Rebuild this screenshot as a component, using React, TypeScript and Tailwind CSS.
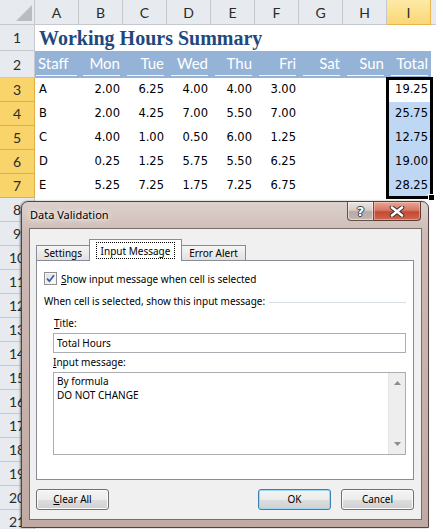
import React from "react";

const cols = ["A", "B", "C", "D", "E", "F", "G", "H", "I"];
const heads = ["Staff", "Mon", "Tue", "Wed", "Thu", "Fri", "Sat", "Sun", "Total"];
const data = [
  ["A", "2.00", "6.25", "4.00", "4.00", "3.00", "", "", "19.25"],
  ["B", "2.00", "4.25", "7.00", "5.50", "7.00", "", "", "25.75"],
  ["C", "4.00", "1.00", "0.50", "6.00", "1.25", "", "", "12.75"],
  ["D", "0.25", "1.25", "5.75", "5.50", "6.25", "", "", "19.00"],
  ["E", "5.25", "7.25", "1.75", "7.25", "6.75", "", "", "28.25"],
];

const rowHeadNorm =
  "w-[35px] shrink-0 flex items-center justify-center border-r border-b font-['Lato',sans-serif] text-[14px] bg-[#e7eaee] border-[#c5c9cf] text-[#2b2b2b]";
const rowHeadSel =
  "w-[35px] shrink-0 flex items-center justify-center border-r border-b font-['Lato',sans-serif] text-[14px] bg-[#f8d46b] border-[#dfae45] text-[#2b2b2b]";

function Btn({ children, def }: { children: React.ReactNode; def?: boolean }) {
  return (
    <div
      className={
        def
          ? "w-[73px] h-[21px] rounded-[3px] border border-[#3c7fb1] bg-[linear-gradient(180deg,#f4f4f4_0%,#ececec_50%,#dedede_51%,#d0d0d0_100%)] shadow-[inset_0_0_0_1px_#9fd7f5] flex items-center justify-center text-[10px] text-black"
          : "w-[73px] h-[21px] rounded-[3px] border border-[#707070] bg-[linear-gradient(180deg,#f4f4f4_0%,#ececec_50%,#dedede_51%,#d0d0d0_100%)] shadow-[inset_0_0_0_1px_#fbfbfb] flex items-center justify-center text-[10px] text-black"
      }
    >
      {children}
    </div>
  );
}

export default function App() {
  const lowerRows = [8, 9, 10, 11, 12, 13, 14, 15, 16, 17, 18, 19, 20, 21];
  return (
    <div className="relative w-[436px] h-[529px] overflow-hidden bg-white">
      {/* Spreadsheet */}
      <div className="flex flex-col">
        {/* Column headers */}
        <div className="flex h-[25px]">
          <div className="w-[35px] h-[25px] shrink-0 border-r border-b border-[#c5c9cf] bg-[#e7eaee] relative">
            <svg className="absolute left-[15px] top-[4px]" width="18" height="18" viewBox="0 0 18 18">
              <polygon points="17,1 17,17 1,17" fill="#b9bcc0" />
            </svg>
          </div>
          {cols.map((c) => (
            <div
              key={c}
              className={
                c === "I"
                  ? "w-[44px] h-[25px] shrink-0 flex items-center justify-center border-r border-b border-[#e9b64e] bg-[linear-gradient(180deg,#feeaa6_0%,#f9d775_100%)] font-['Lato',sans-serif] text-[14px] text-[#2b2b2b]"
                  : "w-[44px] h-[25px] shrink-0 flex items-center justify-center border-r border-b border-[#c5c9cf] bg-[#e7eaee] font-['Lato',sans-serif] text-[14px] text-[#2b2b2b]"
              }
            >
              {c}
            </div>
          ))}
          <div className="flex-1 h-[25px] border-b border-[#c5c9cf] bg-[#e7eaee]" />
        </div>

        {/* Row 1 */}
        <div className="flex h-[26px]">
          <div className={rowHeadNorm}>1</div>
          <div className="flex-1 flex items-center pl-[4px] font-['Liberation_Serif',serif] font-bold text-[20px] text-[#1f497d] whitespace-nowrap">
            Working Hours Summary
          </div>
        </div>

        {/* Row 2 */}
        <div className="flex h-[27px]">
          <div className={rowHeadNorm}>2</div>
          {heads.map((h, i) => (
            <div key={h} className="w-[44px] shrink-0 h-full bg-[#95b3d7] flex flex-col">
              <div
                className={
                  i === 0
                    ? "flex-1 flex items-center justify-start pl-[3px] pt-[1px] font-['Lato',sans-serif] text-[15px] text-white"
                    : "flex-1 flex items-center justify-end pr-[3px] pt-[1px] font-['Lato',sans-serif] text-[15px] text-white"
                }
              >
                {h}
              </div>
              <div
                className={
                  i === 0
                    ? "h-[2px] ml-[1px] mr-[2px] mb-[2px] bg-[#f4f7fb]"
                    : "h-[2px] ml-[4px] mr-[3px] mb-[2px] bg-[#f4f7fb]"
                }
              />
            </div>
          ))}
          <div className="flex-1" />
        </div>

        {/* Rows 3-7 */}
        {data.map((r, ri) => (
          <div key={ri} className="flex h-[24px]">
            <div className={rowHeadSel}>{ri + 3}</div>
            {r.map((v, ci) => (
              <div
                key={ci}
                className={
                  ci === 0
                    ? "w-[44px] shrink-0 flex items-center pl-[4px] font-['DejaVu_Sans',sans-serif] text-[11.5px] text-black"
                    : ci === 8 && ri > 0
                    ? "w-[44px] shrink-0 flex items-center justify-end pr-[3px] bg-[#bed7f5] font-['DejaVu_Sans',sans-serif] text-[11.5px] text-black"
                    : "w-[44px] shrink-0 flex items-center justify-end pr-[3px] font-['DejaVu_Sans',sans-serif] text-[11.5px] text-black"
                }
              >
                {v}
              </div>
            ))}
            <div className="flex-1" />
          </div>
        ))}

        {/* Rows 8+ */}
        {lowerRows.map((n) => (
          <div key={n} className="flex h-[24px]">
            <div className={rowHeadNorm}>{n}</div>
            <div className="flex-1" />
          </div>
        ))}
      </div>

      {/* Selection border */}
      <div className="absolute left-[386px] top-[77px] w-[47px] h-[122px] border-[3px] border-black" />
      <div className="absolute left-[428px] top-[194px] w-[7px] h-[7px] bg-black border border-white" />

      {/* Dialog */}
      <div className="absolute left-[21px] top-[201px] w-[408px] h-[327px] rounded-t-[7px] border border-[#4f4441] bg-[linear-gradient(180deg,#ddd1cd_0%,#cdbab4_10%,#c0aaa4_100%)] shadow-[-1px_0_2px_rgba(0,0,0,0.4)] flex flex-col font-['Noto_Sans',sans-serif]">
        {/* Title bar */}
        <div className="h-[26px] shrink-0 flex items-start justify-between pl-[8px] pr-[7px]">
          <span className="mt-[6px] text-[11px] leading-[14px] text-black [text-shadow:0_0_5px_#fff,0_0_8px_#fff]">
            Data Validation
          </span>
          <div className="flex">
            <div className="w-[27px] h-[19px] rounded-bl-[4px] border border-t-0 border-[#5e514d] bg-[linear-gradient(180deg,#ece4e1_0%,#d8ccc8_45%,#b9a8a3_55%,#c6b7b2_100%)] shadow-[inset_0_0_0_1px_rgba(255,255,255,0.5)] flex items-center justify-center">
              <span className="font-['DejaVu_Sans',sans-serif] font-bold text-[13px] leading-[13px] text-white [text-shadow:1px_0_0_#3c3c3c,-1px_0_0_#3c3c3c,0_1px_0_#3c3c3c,0_-1px_0_#3c3c3c]">
                ?
              </span>
            </div>
            <div className="w-[47px] h-[19px] rounded-br-[4px] border border-t-0 border-l-0 border-[#5e3a33] bg-[linear-gradient(180deg,#e8a596_0%,#d77965_45%,#c34a33_55%,#d0664d_100%)] shadow-[inset_0_0_0_1px_rgba(255,220,210,0.45)] flex items-center justify-center">
              <svg width="16" height="11" viewBox="0 0 16 11">
                <path d="M3 1.5 L13 9.5 M13 1.5 L3 9.5" stroke="#3d2f2c" strokeWidth="4.5" strokeLinecap="round" />
                <path d="M3 1.5 L13 9.5 M13 1.5 L3 9.5" stroke="#ffffff" strokeWidth="2.6" strokeLinecap="round" />
              </svg>
            </div>
          </div>
        </div>

        {/* Client area */}
        <div className="flex-1 mx-[6px] ml-[7px] mb-[7px] border border-[#7a6c68] bg-[#f0f0f0] px-[6px] pt-[10px] flex flex-col">
          {/* Tabs */}
          <div className="flex items-end h-[21px] text-[10px] text-black">
            <div className="w-[54px] h-[15px] border border-b-0 border-[#898c95] bg-[linear-gradient(180deg,#f5f5f5,#e1e1e1)] flex items-center justify-center pt-[1px]">
              Settings
            </div>
            <div className="relative z-10 w-[93px] h-[22px] -mb-px -ml-px border border-b-0 border-[#898c95] bg-white flex items-start justify-center pt-[2px]">
              <div className="border border-dotted border-black px-[4px] h-[17px] flex items-center leading-[14px]">
                Input Message
              </div>
            </div>
            <div className="w-[65px] h-[15px] -ml-px border border-b-0 border-[#898c95] bg-[linear-gradient(180deg,#f5f5f5,#e1e1e1)] flex items-center justify-center pt-[1px]">
              Error Alert
            </div>
          </div>

          {/* Panel */}
          <div className="w-[378px] h-[220px] border border-[#898c95] bg-white pl-[7px] pr-[7px] pt-[11px] flex flex-col text-[10px] text-black leading-[14px]">
            <div className="flex items-center h-[13px]">
              <div className="w-[13px] h-[13px] border border-[#8e8f8f] bg-[linear-gradient(135deg,#dcdcdc,#ffffff)] shadow-[inset_0_0_0_1px_#f4f4f4] flex items-center justify-center">
                <svg width="9" height="9" viewBox="0 0 9 9">
                  <path d="M1 4.6 L3.4 7.2 L8 1.2" fill="none" stroke="#3b5aa3" strokeWidth="1.7" />
                </svg>
              </div>
              <span className="ml-[4px] whitespace-nowrap">
                <u className="underline-offset-[1px]">S</u>how input message when cell is selected
              </span>
            </div>

            <div className="flex items-center mt-[9px] h-[14px]">
              <span className="whitespace-nowrap">When cell is selected, show this input message:</span>
              <div className="flex-1 h-px mt-[3px] ml-[4px] bg-[#d6dde3]" />
            </div>

            <div className="ml-[9px] flex flex-col">
              <div className="mt-[8px] h-[14px] pl-[1px]">
                <u className="underline-offset-[1px]">T</u>itle:
              </div>
              <div className="mt-[3px] h-[20px] border border-[#abadb3] bg-white flex items-center pl-[3px]">
                Total Hours
              </div>
              <div className="mt-[2px] h-[14px]">
                <u className="underline-offset-[1px]">I</u>nput message:
              </div>
              <div className="mt-[3px] h-[83px] border border-[#abadb3] bg-white flex">
                <div className="flex-1 pl-[3px] pt-[1px] leading-[14px]">
                  <div>By formula</div>
                  <div>DO NOT CHANGE</div>
                </div>
                <div className="w-[17px] h-full bg-[#eeeeee] border-l border-[#e4e4e4] flex flex-col items-center justify-between py-[8px]">
                  <svg width="7" height="4" viewBox="0 0 7 4">
                    <polygon points="0,4 7,4 3.5,0" fill="#8c8c8c" />
                  </svg>
                  <svg width="7" height="4" viewBox="0 0 7 4">
                    <polygon points="0,0 7,0 3.5,4" fill="#8c8c8c" />
                  </svg>
                </div>
              </div>
            </div>
          </div>

          {/* Buttons */}
          <div className="mt-[9px] flex items-center w-[378px]">
            <Btn>
              <span>
                <u className="underline-offset-[1px]">C</u>lear All
              </span>
            </Btn>
            <div className="flex-1" />
            <Btn def>OK</Btn>
            <div className="w-[10px]" />
            <Btn>Cancel</Btn>
          </div>
        </div>
      </div>
    </div>
  );
}
